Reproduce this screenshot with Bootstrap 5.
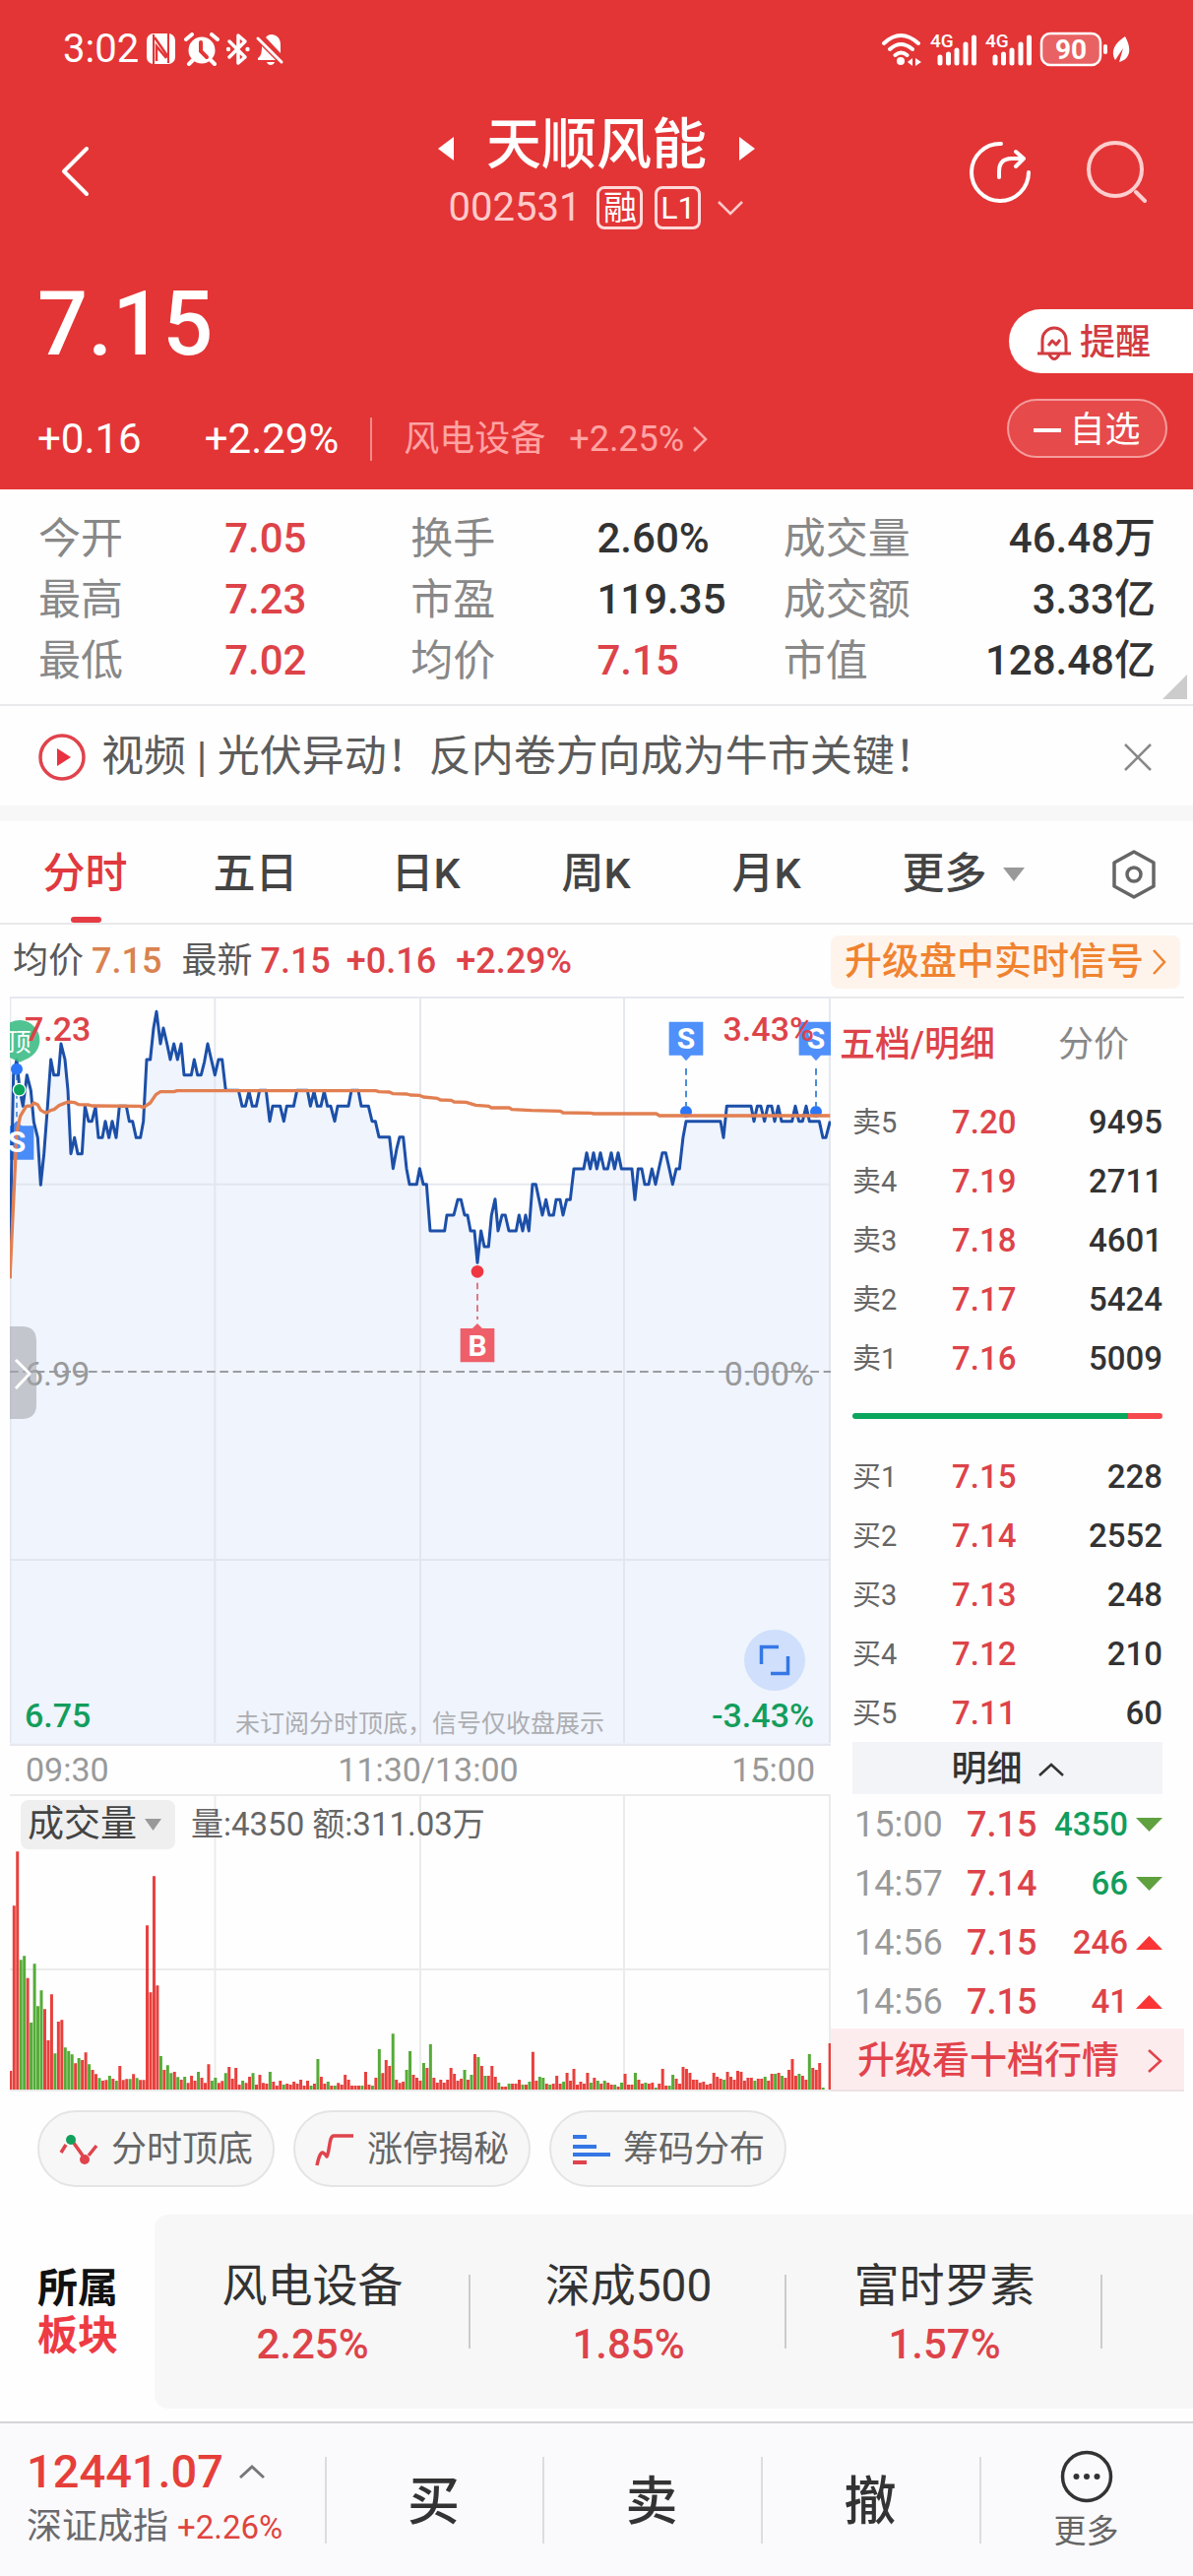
<!DOCTYPE html>
<html lang="zh-CN">
<head>
<meta charset="utf-8">
<meta name="viewport" content="width=device-width, initial-scale=1">
<title>天顺风能 002531</title>
<link href="https://cdn.jsdelivr.net/npm/bootstrap@5.3.0/dist/css/bootstrap.min.css" rel="stylesheet">
<style>
  :root { --up:#dd4349; --down:#139d5c; --ink:#333; --dim:#888; --line:#e9e9eb; }
  body { font-family:Roboto,"Noto Sans CJK SC",sans-serif; font-size:36px; line-height:1.25; color:var(--ink); background:#fefefe; overflow-x:hidden; }
  svg { display:block; flex:none; }
  button, a { font:inherit; color:inherit; text-decoration:none; white-space:nowrap; }
  .plain { background:none; border:0; padding:0; }
  .up { color:var(--up); } .down { color:var(--down); }
  .med { font-weight:500; }
  .nw { white-space:nowrap; }

  .top-area { background:#e33536; color:#fff; height:497px; }
  .status-bar { height:100px; padding:0 64px; font-size:40px; }
  .title-bar { display:grid; grid-template-columns:1fr auto 1fr; padding:14px 45px 0; height:134px; align-items:center; }
  .stock-name { font-size:56px; line-height:66px; font-weight:500; margin:0; }
  .code-line { font-size:40px; line-height:46px; height:46px; margin-top:8px; color:#ffcaca; }
  .tag-box { border:3px solid #ffd9d9; border-radius:8px; width:47px; height:44px; font-size:34px; line-height:38px; text-align:center; color:#fff; }
  .tag-latin { font-size:32px; }
  .price-area { padding-left:38px; }
  .price-big { font-size:90px; line-height:100px; padding-top:46px; font-weight:500; }
  .change-line { margin-top:36px; height:60px; font-size:42px; }
  .sector-link { font-size:36px; color:#ffa3a3; }
  .v-rule { width:2px; height:44px; background:#f08a8a; margin:0 24px 0 32px; }
  .alert-btn { margin-top:80px; width:187px; height:65px; border-radius:33px 0 0 33px; background:#fff; color:#d23b3f; border:0; padding:4px 0 0 28px; }
  .fav-btn { margin:26px 26px 0 0; width:163px; height:60px; border-radius:30px; background:#e64a4b; color:#fff; border:2px solid #f59c9c; padding:4px 0 0; }

  .stats { display:grid; grid-template-columns:19fr 19fr 19fr 19fr 13fr 25fr; padding:19px 38px 13px 39px; height:220px; font-size:42px; line-height:62px; border-bottom:2px solid var(--line); margin:0; position:relative; }
  .stats dt { font-weight:400; color:var(--dim); font-size:43px; white-space:nowrap; }
  .stats dd { margin:0; font-weight:500; white-space:nowrap; }
  .corner { position:absolute; right:6px; bottom:5px; }
  .news { height:101px; padding:2px 40px 0 39px; font-size:43px; color:#5c5c5c; }
  .gap-band { height:16px; background:#f7f7f7; }
  .period-tabs { display:grid; grid-template-columns:repeat(5,173fr) 227fr 120fr; height:105px; font-size:43px; border-bottom:2px solid var(--line); color:#444; text-align:center; line-height:107px; }
  .period-tabs .tab-on { color:#e0393f; position:relative; height:103px; }
  .tab-on::after { content:""; position:absolute; left:calc(50% - 15px); bottom:0; width:31px; height:6px; border-radius:3px; background:#e63b44; }
  .info-line { height:73px; padding:2px 13px 0 13px; color:#5a5a5a; }
  .upgrade { background:#fff4ec; color:#f08330; font-size:38px; height:54px; border-radius:8px; padding:0 14px; }

  .market { display:grid; grid-template-columns:834fr 359fr; padding:0 9px 0 10px; }
  .time-axis { height:49px; padding:0 16px; font-size:34px; color:#999; }
  .vol-wrap { position:relative; }
  .vol-head { position:absolute; left:11px; top:6px; font-size:33px; color:#666; }
  .vol-pick { background:#efefef; border:0; border-radius:8px; height:50px; font-size:37px; padding:0 14px 0 7px; color:#444; }
  .book { border-top:2px solid var(--line); }
  .book-tabs { height:95px; padding-left:9px; }
  .inset { margin:0 22px; }
  .book table { width:100%; font-size:33px; }
  .book td { height:60px; padding:2px 0 0; line-height:40px; vertical-align:middle; white-space:nowrap; }
  .book td.lvl { color:#666; font-size:29px; width:101px; }
  .depth-bar { height:6px; border-radius:3px; overflow:hidden; margin:26px 22px 28px; }
  .detail-btn { height:53px; background:#f3f4f8; border:0; padding:3px 0 0; }
  .deals td.t { color:#999; font-size:36px; width:116px; padding-left:2px; }
  .deals td.p { font-size:36px; }
  .ten-level { height:64px; background:#fdecee; color:#e2434b; font-size:38px; padding:3px 22px 0 27px; border-bottom:2px solid #eee0e2; margin-top:-2px; }

  .tools { padding:19px 38px 0; gap:19px; }
  .tool-btn { height:78px; width:241px; border:2px solid #e4e4e4; border-radius:39px; background:#f7f7f7; color:#666; gap:13px; padding:2px 0 0; }
  .board { margin-top:28px; height:197px; }
  .board-label { width:157px; padding-left:38px; font-size:41px; line-height:48px; font-weight:700; color:#111; }
  .board-list { background:#f7f7f7; border-radius:14px 0 0 14px; overflow:hidden; }
  .board-item { flex:0 0 321px; font-size:46px; line-height:60px; position:relative; padding-top:6px; }
  .board-item .pct { font-size:42px; }
  .board-item::after { content:""; position:absolute; right:0; top:61px; width:2px; height:75px; background:#ccc; }
  .trade-bar { margin-top:13px; height:157px; border-top:2px solid #d5d5d8; background:#fafafc; display:grid; grid-template-columns:330fr 221fr 222fr 222fr 217fr; }
  .idx { padding:0 0 4px 27px; text-align:left; }
  .idx-val { font-size:47px; line-height:60px; color:#e63f3a; font-weight:500; }
  .idx-sub { line-height:52px; color:#6a6a6e; }
  .idx-sub .small-pct { font-size:33px; color:#e0443f; }
  .act { font-size:53px; font-weight:500; border:0; background:none; padding:5px 0 0; position:relative; }
  .act::before { content:""; position:absolute; left:0; top:34px; width:2px; height:88px; background:#dcdce0; }
  .act-more { font-size:33px; font-weight:400; color:#666; padding-top:2px; }
</style>
</head>
<body>
<header class="top-area">
  <div class="status-bar d-flex align-items-center justify-content-between">
    <div class="d-flex align-items-center">
      <span>3:02</span>
      <svg class="ms-2" width="140" height="34" viewBox="0 0 140 34" fill="#fff">
        <rect x="0" y="1" width="29" height="31" rx="7"/>
        <path d="M7 2v30M22 1v30" fill="none" stroke="#e33536" stroke-width="2"/>
        <path d="M8 5l14 20M10 29V14l10 12" fill="none" stroke="#e33536" stroke-width="2.500"/>
        <circle cx="56" cy="18" r="13.500"/><path d="M40 7l6-5M72 7l-6-5M47 28l-4 4M65 28l4 4" stroke="#fff" stroke-width="4" stroke-linecap="round"/><path d="M55 10v9l6 6" stroke="#e33536" stroke-width="4" fill="none" stroke-linecap="round"/>
        <path d="M84 9l16 16-7 6V3l7 6-16 16" fill="none" stroke="#fff" stroke-width="3.500" stroke-linejoin="round" stroke-linecap="round"/><circle cx="83" cy="17" r="2.200"/><circle cx="102.500" cy="17" r="2.200"/>
        <path d="M121 5c4-6 15-3 15 7v9zM113 26c3-2 4-5 4-12l14 14h-18zM122 30h8c-1 4-7 4-8 0z"/><path d="M113 6l24 24" stroke="#fff" stroke-width="3" stroke-linecap="round"/>
      </svg>
    </div>
    <svg width="253" height="38" viewBox="0 0 253 38" fill="#fff" stroke-linecap="round">
      <g fill="none" stroke="#fff" stroke-width="4"><path d="M3 13q17-16 35 0M9 19q11-10 23 0M14.500 25q6-5 12 0"/></g>
      <circle cx="20" cy="31" r="4"/><path d="M27 32l5-4v8zM41 32l-6-4v8z"/>
      <g font-family="Roboto" font-size="19" font-weight="500"><text x="50" y="17">4G</text><text x="106" y="17">4G</text></g>
      <g stroke="#fff" stroke-width="5"><path d="M60 27v6M68.500 24v9M77 20v13M86 14v19M94.500 7v26M116 27v6M124.500 24v9M133 20v13M142 14v19M150.500 7v26"/></g>
      <rect x="163" y="3" width="60" height="32" rx="9" fill="#e96263" stroke="#fff" stroke-width="2.500"/>
      <text x="193" y="29" text-anchor="middle" font-family="Roboto" font-size="28" font-weight="700">90</text>
      <rect x="226" y="14" width="4" height="10" rx="2"/>
      <path d="M248 6c8 14 4 24-6 26l4-14-8 12c-5-8-1-17 10-24z"/>
    </svg>
  </div>

  <div class="title-bar">
    <button class="plain text-start ps-3" aria-label="返回"><svg width="30" height="52" viewBox="0 0 30 52" fill="none" stroke="#fff" stroke-width="4" stroke-linecap="round" stroke-linejoin="round"><path d="M27 3L4 26l23 23"/></svg></button>
    <div>
      <div class="d-flex align-items-center justify-content-center gap-4">
        <button class="plain me-2 pt-2" aria-label="上一只"><svg width="18" height="26" viewBox="0 0 18 26"><path d="M17 1v24L1 13z" fill="#fff"/></svg></button>
        <h1 class="stock-name nw">天顺风能</h1>
        <button class="plain ms-2 pt-2" aria-label="下一只"><svg width="18" height="26" viewBox="0 0 18 26"><path d="M1 1v24l16-12z" fill="#fff"/></svg></button>
      </div>
      <div class="code-line d-flex align-items-center justify-content-center">
        <span class="me-3">002531</span><span class="tag-box me-2">融</span><span class="tag-box tag-latin ms-1">L1</span>
        <svg class="ms-3" width="28" height="16" viewBox="0 0 28 16" fill="none" stroke="#ffcaca" stroke-width="2.500"><path d="M2 2l12 12L26 2"/></svg>
      </div>
    </div>
    <div class="d-flex justify-content-end gap-5">
      <button class="plain me-2" aria-label="分享"><svg width="62" height="64" viewBox="0 0 62 64" fill="none" stroke="#fff" stroke-width="4" stroke-linecap="round" stroke-linejoin="round"><path d="M32 4A29 29 0 1 0 60 33M30 38v-6q0-13 13-13h12M47 12l8 7-8 8"/></svg></button>
      <button class="plain" aria-label="搜索"><svg width="64" height="64" viewBox="0 0 64 64" fill="none" stroke="#ffcdcd" stroke-width="4" stroke-linecap="round"><circle cx="30" cy="30" r="27"/><path d="M51 53l9 9"/></svg></button>
    </div>
  </div>

  <div class="price-area d-flex justify-content-between">
    <div>
      <div class="price-big">7.15</div>
      <div class="change-line d-flex align-items-center nw">
        <span>+0.16</span><span class="ms-5 ps-3">+2.29%</span>
        <span class="v-rule"></span>
        <a href="#" class="sector-link d-flex align-items-center ms-2"><span>风电设备</span><span class="ms-4">+2.25%</span>
        <svg class="ms-2" width="16" height="28" viewBox="0 0 16 28" fill="none" stroke="#ffa3a3" stroke-width="2.500"><path d="M2 2l12 12L2 26"/></svg></a>
      </div>
    </div>
    <div class="d-flex flex-column align-items-end">
      <button class="alert-btn d-flex align-items-center med"><svg class="me-2" width="36" height="38" viewBox="0 0 36 38" fill="none" stroke="#d23b3f" stroke-width="3" stroke-linejoin="round"><path d="M6 28V15a12 12 0 0 1 24 0v13M1 29h34M13 30q5 9 10 0M12 21l4-5 4 4 4-5"/></svg>提醒</button>
      <button class="fav-btn d-flex align-items-center justify-content-center gap-2"><svg width="28" height="4"><rect width="28" height="4" fill="#fff"/></svg>自选</button>
    </div>
  </div>
</header>

<dl class="stats">
  <dt>今开</dt><dd class="up">7.05</dd><dt>换手</dt><dd>2.60%</dd><dt>成交量</dt><dd class="text-end">46.48万</dd>
  <dt>最高</dt><dd class="up">7.23</dd><dt>市盈</dt><dd>119.35</dd><dt>成交额</dt><dd class="text-end">3.33亿</dd>
  <dt>最低</dt><dd class="up">7.02</dd><dt>均价</dt><dd class="up">7.15</dd><dt>市值</dt><dd class="text-end">128.48亿</dd>
  <svg class="corner" width="25" height="25"><path d="M25 0v25H0z" fill="#ccc"/></svg>
</dl>

<div class="news d-flex align-items-center">
  <svg width="48" height="48" viewBox="0 0 48 48"><circle cx="24" cy="24" r="22" fill="none" stroke="#e0434c" stroke-width="3.500"/><path d="M19 15v18l14-9z" fill="#e8323f"/></svg>
  <a href="#" class="ms-3 nw flex-grow-1">视频 | 光伏异动！反内卷方向成为牛市关键！</a>
  <button class="plain" aria-label="关闭"><svg width="32" height="32" viewBox="0 0 32 32" stroke="#888" stroke-width="2.500"><path d="M3 3l26 26M29 3L3 29"/></svg></button>
</div>
<div class="gap-band"></div>

<nav class="period-tabs">
  <a href="#" class="tab-on med">分时</a><a href="#" class="med">五日</a><a href="#" class="med">日K</a><a href="#" class="med">周K</a><a href="#" class="med">月K</a>
  <a href="#" class="med d-flex align-items-center justify-content-center gap-3">更多<svg width="22" height="14"><path d="M0 0h22L11 14z" fill="#999"/></svg></a>
  <button class="plain d-flex align-items-center justify-content-center" aria-label="设置"><svg width="46" height="50" viewBox="0 0 46 50" fill="none" stroke="#666" stroke-width="3.500" stroke-linejoin="round"><path d="M23 2l20 11v24L23 48 3 37V13z"/><circle cx="23" cy="25" r="7"/></svg></button>
</nav>

<div class="info-line d-flex align-items-center justify-content-between nw">
  <div class="d-flex">
    <span>均价</span><span class="ms-2 med" style="color:#d9824f">7.15</span><span class="ms-3 ps-1">最新</span>
    <span class="ms-2 med up">7.15</span><span class="ms-3 med up">+0.16</span><span class="ms-3 ps-1 med up">+2.29%</span>
  </div>
  <a href="#" class="upgrade d-flex align-items-center med">升级盘中实时信号<svg class="ms-2" width="15" height="28" viewBox="0 0 15 28" fill="none" stroke="#f08330" stroke-width="2.500"><path d="M2 2l11 12L2 26"/></svg></a>
</div>

<main class="market">
  <section>
    <svg id="price" class="w-100" viewBox="0 0 834 761" font-family='Roboto,"Noto Sans CJK SC",sans-serif'>
      <defs><clipPath id="cp"><rect width="834" height="761"/></clipPath></defs>
      <g clip-path="url(#cp)">
        <g transform="scale(.33333) translate(-30 -36)" stroke-linejoin="round">
          <path id="area" fill="#eff4fd"/>
          <path d="M30 39H2532M30 608H2532M30 1752H2532M655 39V2310M1281 39V2310M1902 39V2310M31 39V2310M2529 39V2310" stroke="#dfe2ea" stroke-opacity=".8" stroke-width="6"/>
          <path d="M30 2316H2532" stroke="#e6e8ee" stroke-width="8"/>
          <path d="M30 1179H2532" stroke="#9a9ca3" stroke-width="6" stroke-dasharray="26 14"/>
          <path d="M0 430h36l15-15 15 15h37v103H0z" fill="#4a8cf7"/>
          <path d="M51 275V415" stroke="#4a8cd8" stroke-width="5" stroke-dasharray="16 12"/>
          <path id="pline" fill="none" stroke="#1c4fa8" stroke-width="9"/>
          <path d="M60 236l-26-12a61 61 0 1 1 52 0z" fill="#3ebd86" fill-opacity=".9"/>
          <circle cx="51" cy="257" r="18" fill="#2a76f6"/>
          <circle cx="59" cy="320" r="21" fill="#fff"/><circle cx="59" cy="320" r="17" fill="#0da55e"/>
          <circle cx="2091" cy="387" r="18" fill="#2a76f6"/><circle cx="2487" cy="387" r="18" fill="#2a76f6"/>
          <path id="aline" fill="none" stroke="#e27f52" stroke-width="10"/>
          <path d="M2091 255V372M2487 255V372" stroke="#4a8cd8" stroke-width="6" stroke-dasharray="20 14"/>
          <path d="M2039 113h104v102h-37l-15 17-15-17h-37zM2435 113h104v102h-37l-15 17-15-17h-37z" fill="#4f90fa"/>
          <path d="M1455 908V1020" stroke="#dc5f6b" stroke-width="5" stroke-dasharray="20 14"/>
          <circle cx="1455" cy="874" r="19" fill="#ef3742"/>
          <path d="M1403 1047h37l15-15 15 15h37v103h-104z" fill="#ee5f6a"/>
        </g>
        <g fill="#fff" font-weight="700" font-size="30" text-anchor="middle">
          <text x="687" y="53">S</text><text x="819" y="53">S</text><text x="475" y="365">B</text><text x="7" y="158">S</text>
          <text x="9" y="55" font-size="25" font-weight="400">顶</text>
        </g>
        <g font-size="34" font-weight="500">
          <text x="15" y="45" fill="#dd4349">7.23</text><text x="817" y="45" text-anchor="end" fill="#dd4349">3.43%</text>
          <g fill="#999" font-weight="400"><text x="15" y="395">6.99</text><text x="817" y="395" text-anchor="end">0.00%</text></g>
          <g fill="#139d5c"><text x="15" y="742">6.75</text><text x="817" y="742" text-anchor="end">-3.43%</text></g>
        </g>
        <path d="M0 335h12q15 0 15 15v64q0 15-15 15H0z" fill="#a5a7ad" fill-opacity=".6"/>
        <path d="M6 369l14 14-14 15" fill="none" stroke="#fff" stroke-width="3"/>
        <text x="229" y="747" font-size="25" fill="#adadb0">未订阅分时顶底，信号仅收盘展示</text>
        <circle cx="777" cy="674" r="31" fill="#cfdffc"/>
        <path d="M781 660.500h-17.500V678M773 687.500h17.500V670" fill="none" stroke="#3577e5" stroke-width="3.500"/>
      </g>
    </svg>
    <div class="time-axis d-flex align-items-center justify-content-between"><span>09:30</span><span class="ps-3">11:30/13:00</span><span>15:00</span></div>
    <div class="vol-wrap">
      <svg id="vol" class="w-100" viewBox="0 0 834 302">
        <path d="M0 1H834M0 178H834M208.500 1V301M417 1V301M624 1V301M833 1V301M0 301H834" stroke="#ebebeb" stroke-width="2"/>
      </svg>
      <div class="vol-head d-flex align-items-center nw">
        <button class="vol-pick d-flex align-items-center gap-2">成交量<svg width="17" height="12"><path d="M0 0h17L8.500 12z" fill="#999"/></svg></button>
        <span class="ms-3">量:4350 额:311.03万</span>
      </div>
    </div>
  </section>

  <aside class="book d-flex flex-column">
    <div class="book-tabs d-flex align-items-center nw"><a href="#" class="up med">五档/明细</a><a href="#" class="ms-5 ps-3" style="color:#888">分价</a></div>
    <div class="inset"><table><tbody>
      <tr><td class="lvl">卖5</td><td class="up med">7.20</td><td class="text-end med">9495</td></tr>
      <tr><td class="lvl">卖4</td><td class="up med">7.19</td><td class="text-end med">2711</td></tr>
      <tr><td class="lvl">卖3</td><td class="up med">7.18</td><td class="text-end med">4601</td></tr>
      <tr><td class="lvl">卖2</td><td class="up med">7.17</td><td class="text-end med">5424</td></tr>
      <tr><td class="lvl">卖1</td><td class="up med">7.16</td><td class="text-end med">5009</td></tr>
    </tbody></table></div>
    <div class="depth-bar d-flex"><div style="width:89%;background:#0aa65d"></div><div class="flex-grow-1" style="background:#f5494e"></div></div>
    <div class="inset"><table><tbody>
      <tr><td class="lvl">买1</td><td class="up med">7.15</td><td class="text-end med">228</td></tr>
      <tr><td class="lvl">买2</td><td class="up med">7.14</td><td class="text-end med">2552</td></tr>
      <tr><td class="lvl">买3</td><td class="up med">7.13</td><td class="text-end med">248</td></tr>
      <tr><td class="lvl">买4</td><td class="up med">7.12</td><td class="text-end med">210</td></tr>
      <tr><td class="lvl">买5</td><td class="up med">7.11</td><td class="text-end med">60</td></tr>
    </tbody></table></div>
    <button class="detail-btn inset d-flex align-items-center justify-content-center gap-3 med">明细<svg width="26" height="15" viewBox="0 0 26 15" fill="none" stroke="#333" stroke-width="2.500"><path d="M1 13L13 2l12 11"/></svg></button>
    <div class="inset deals"><table><tbody>
      <tr><td class="t">15:00</td><td class="p up med">7.15</td><td class="down med"><div class="d-flex align-items-center justify-content-end">4350<svg class="ms-2" width="27" height="14"><path d="M0 0h27L13.500 14z" fill="#5fa03f"/></svg></div></td></tr>
      <tr><td class="t">14:57</td><td class="p up med">7.14</td><td class="down med"><div class="d-flex align-items-center justify-content-end">66<svg class="ms-2" width="27" height="14"><path d="M0 0h27L13.500 14z" fill="#5fa03f"/></svg></div></td></tr>
      <tr><td class="t">14:56</td><td class="p up med">7.15</td><td class="up med"><div class="d-flex align-items-center justify-content-end">246<svg class="ms-2" width="27" height="14"><path d="M0 14h27L13.500 0z" fill="#fb3535"/></svg></div></td></tr>
      <tr><td class="t">14:56</td><td class="p up med">7.15</td><td class="up med"><div class="d-flex align-items-center justify-content-end">41<svg class="ms-2" width="27" height="14"><path d="M0 14h27L13.500 0z" fill="#fb3535"/></svg></div></td></tr>
    </tbody></table></div>
    <a href="#" class="ten-level d-flex align-items-center justify-content-between med">升级看十档行情<svg width="16" height="26" viewBox="0 0 16 26" fill="none" stroke="#e2434b" stroke-width="2.500"><path d="M2 2l12 11L2 24"/></svg></a>
  </aside>
</main>

<div class="tools d-flex">
  <button class="tool-btn d-flex align-items-center justify-content-center"><svg width="40" height="34" viewBox="0 0 40 34" fill="none" stroke="#e0434c" stroke-width="3.500"><path d="M2 20l5-8M14 9l10 14M30 23l8-10"/><circle cx="12" cy="7" r="5" fill="#12a05c" stroke="none"/><circle cx="26" cy="27" r="5" fill="#e0434c" stroke="none"/></svg>分时顶底</button>
  <button class="tool-btn d-flex align-items-center justify-content-center"><svg width="40" height="34" viewBox="0 0 40 34" fill="none" stroke="#e0434c" stroke-width="3.500" stroke-linejoin="round"><path d="M2 33q3-14 6-13 2 1 4 4c3-4 2-21 7-21h20"/></svg>涨停揭秘</button>
  <button class="tool-btn d-flex align-items-center justify-content-center"><svg width="40" height="34" viewBox="0 0 40 34" stroke-width="4"><path d="M2 4h14M2 14h24M2 22h38" stroke="#3577e5"/><path d="M2 30h14" stroke="#e0434c"/></svg>筹码分布</button>
</div>

<section class="board d-flex align-items-center">
  <div class="board-label flex-shrink-0">所属<br><span style="color:#ee3a43">板块</span></div>
  <div class="board-list d-flex flex-grow-1 h-100">
    <a href="#" class="board-item d-flex flex-column justify-content-center align-items-center"><span>风电设备</span><span class="pct up med">2.25%</span></a>
    <a href="#" class="board-item d-flex flex-column justify-content-center align-items-center"><span>深成500</span><span class="pct up med">1.85%</span></a>
    <a href="#" class="board-item d-flex flex-column justify-content-center align-items-center"><span>富时罗素</span><span class="pct up med">1.57%</span></a>
  </div>
</section>

<footer class="trade-bar">
  <button class="plain idx">
    <span class="idx-val d-flex align-items-center">12441.07<svg class="ms-3" width="26" height="16" viewBox="0 0 26 16" fill="none" stroke="#777" stroke-width="3"><path d="M1 14L13 3l12 11"/></svg></span>
    <span class="idx-sub d-block">深证成指 <span class="small-pct">+2.26%</span></span>
  </button>
  <button class="act">买</button><button class="act">卖</button><button class="act">撤</button>
  <button class="act act-more d-flex flex-column align-items-center justify-content-center gap-2"><svg width="54" height="54" viewBox="0 0 54 54"><circle cx="27" cy="27" r="24.500" fill="none" stroke="#333" stroke-width="3.500"/><g fill="#333"><circle cx="16.500" cy="27" r="3"/><circle cx="27" cy="27" r="3"/><circle cx="37.500" cy="27" r="3"/></g></svg>更多</button>
</footer>

<script>
  // Intraday price and average lines, in thirds of a chart unit
  const price = "30,893 35,560 41,275 51,228 60,320 70,370 82,275 94,322 103,418 115,466 124,610 134,515 145,370 155,228 164,275 178,275 186,180 198,228 207,322 216,515 227,466 237,515 250,515 259,370 270,416 280,416 291,372 300,466 312,466 321,416 332,466 342,416 354,466 364,370 385,370 394,416 404,416 415,466 428,466 437,416 447,228 458,228 468,132 477,82 489,180 498,132 509,180 519,228 530,180 541,228 552,180 561,275 583,275 592,228 602,275 613,275 623,235 633,180 644,228 655,275 666,228 677,228 688,322 727,322 738,370 748,370 759,325 769,370 781,370 791,322 811,322 822,416 831,370 854,370 865,416 874,370 895,370 905,322 937,322 946,370 957,325 967,370 978,370 988,325 998,370 1008,370 1020,416 1029,370 1062,370 1071,322 1092,322 1101,370 1123,370 1134,416 1144,416 1155,464 1187,464 1198,560 1209,500 1218,464 1229,464 1239,560 1248,608 1270,608 1279,560 1290,608 1300,608 1311,750 1355,750 1362,702 1383,702 1395,655 1405,655 1416,702 1425,702 1434,750 1446,750 1455,847 1466,750 1476,798 1489,798 1498,702 1509,653 1518,750 1530,702 1540,702 1551,750 1573,750 1582,702 1593,750 1602,702 1612,750 1623,608 1633,608 1643,655 1653,702 1664,655 1674,702 1687,702 1695,655 1707,655 1716,702 1727,655 1738,655 1749,561 1779,561 1788,512 1799,561 1809,512 1819,561 1830,512 1841,561 1852,561 1863,512 1873,561 1884,512 1894,561 1926,561 1935,655 1945,561 1956,561 1965,608 1977,608 1987,561 1998,608 2008,561 2019,512 2029,512 2040,561 2050,608 2061,561 2071,561 2082,464 2091,416 2196,416 2205,466 2215,370 2289,370 2298,416 2308,370 2319,370 2330,416 2340,370 2352,370 2361,416 2372,370 2382,416 2414,416 2424,370 2435,416 2446,416 2457,370 2467,416 2497,416 2508,466 2517,466 2530,416";
  const avg = "30,895 51,450 62,400 80,370 95,369 103,360 115,366 124,382 140,391 156,382 165,380 180,368 207,357 228,359 240,365 270,366 280,369 427,370 437,374 458,360 475,335 489,326 530,326 540,323 1145,323 1155,326 1187,327 1198,332 1240,333 1250,336 1278,337 1290,342 1333,346 1342,351 1375,352 1384,357 1420,358 1450,367 1490,370 1497,375 1552,375 1560,380 1620,383 1708,385 1716,390 1800,391 1810,393 2000,393 2010,399 2530,399";
  document.getElementById("pline").setAttribute("d", "M" + price);
  document.getElementById("area").setAttribute("d", "M" + price + " V2316 H30Z");
  document.getElementById("aline").setAttribute("d", "M" + avg);

  // Volume per minute: r = rising, g = falling
  const vol = "r57 r560 r725 g395 g407 r340 g204 g383 g254 g302 r245 r150 r290 g110 r207 r212 g128 g117 g107 r80 g96 r90 r113 g77 r60 r47 g35 r27 r29 g42 r33 g27 r72 r29 r32 g32 r47 g35 r29 r29 r500 r296 r650 r317 g102 r60 g74 g50 r54 g38 r30 g39 r20 r42 r27 g54 r36 r20 r77 g27 g36 r20 r26 g50 r69 r33 r66 r15 g27 r20 r39 g50 r15 r45 r20 r18 g54 r24 r12 r27 g15 r18 r15 r24 r18 r30 r12 r27 g12 r18 g93 r39 r18 g24 r12 g12 r20 r15 r45 r30 r12 r12 r12 g12 r54 r15 g12 r36 g123 r50 r90 r72 g170 r30 r20 r24 g60 g117 r45 r36 r27 g81 r66 g138 r36 r21 r30 r21 r30 r66 r48 r27 r33 g60 r30 g45 r108 g99 r72 g42 r42 r72 r39 g21 r9 r9 g18 r18 r18 r30 g15 r15 g24 r115 r27 g39 g36 r18 g15 r18 r42 r18 g24 r51 r27 r63 r15 r24 r18 r51 g21 r36 g27 r18 g27 r21 r15 g15 r9 g21 r48 r15 r15 g51 r30 r18 g21 r18 r21 g6 r18 r63 r12 g12 g45 r33 r18 r69 r63 r51 r30 r30 r21 r24 r15 r18 r51 r39 r33 g30 r54 r39 r30 r57 r54 r27 r36 r36 g27 r33 r33 g39 r27 r48 g48 r51 g42 r36 r60 r93 r42 g48 r42 r30 g108 r66 r60 r81 g6 r0 r141".split(" ");
  const d = { r: "", g: "" };
  vol.forEach((v, i) => { d[v[0]] += `M${(i * 3.468 + 0.8).toFixed(2)} 300v-${(v.slice(1) / 3).toFixed(1)}`; });
  for (const [k, c] of [["r", "#e8403d"], ["g", "#56ab38"]]) {
    const p = document.createElementNS("http://www.w3.org/2000/svg", "path");
    p.setAttribute("d", d[k]); p.setAttribute("stroke", c); p.setAttribute("stroke-width", "3");
    document.getElementById("vol").appendChild(p);
  }
</script>
<script src="https://cdn.jsdelivr.net/npm/bootstrap@5.3.0/dist/js/bootstrap.bundle.min.js"></script>
</body>
</html>
